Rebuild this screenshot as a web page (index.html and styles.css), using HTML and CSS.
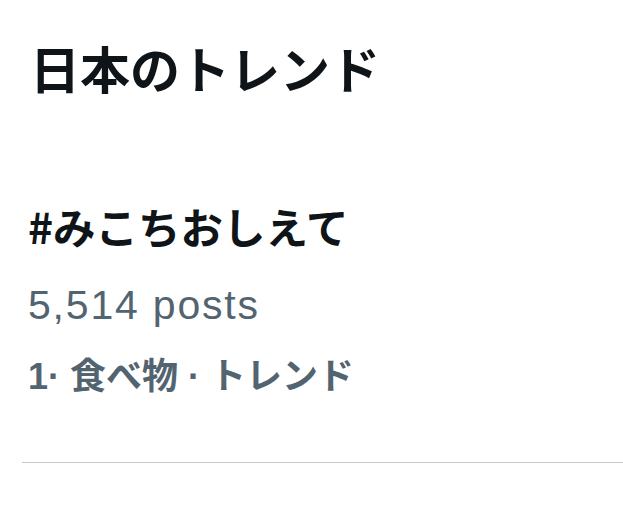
FILE: index.html
```html
<!DOCTYPE html>
<html lang="ja">
<head>
<meta charset="utf-8">
<link rel="stylesheet" href="styles.css">
</head>
<body>
<main class="panel">
  <h1 class="title">日本のトレンド</h1>
  <section class="trend">
    <div class="tag">#みこちおしえて</div>
    <div class="count">5,514 posts</div>
    <div class="meta">1<span class="dot1">·</span> 食べ物 · トレンド</div>
  </section>
  <hr class="divider">
</main>
</body>
</html>
```

FILE: styles.css
```css
html, body {
  margin: 0;
  padding: 0;
  background: #ffffff;
}
body {
  font-family: "Liberation Sans", "Noto Sans CJK JP", sans-serif;
  width: 623px;
  height: 509px;
  overflow: hidden;
}
.panel {
  display: flex;
  flex-direction: column;
  padding-top: 32px;
}
.title {
  margin: 0 0 0 30px;
  font-family: "Noto Sans CJK JP", sans-serif;
  font-weight: 700;
  font-size: 50px;
  line-height: 70px;
  color: #0f1419;
}
.trend {
  display: flex;
  flex-direction: column;
  padding-left: 28px;
  margin-top: 96px;
}
.tag {
  font-family: "Noto Sans CJK JP", sans-serif;
  font-weight: 700;
  font-size: 42.5px;
  line-height: 56px;
  color: #0f1419;
}
.count {
  font-family: "Liberation Sans", sans-serif;
  font-size: 41px;
  line-height: 50px;
  color: #536471;
  margin-top: 26px;
  letter-spacing: 1.8px;
}
.meta {
  font-family: "Liberation Sans", "Noto Sans CJK JP", sans-serif;
  font-weight: 700;
  font-size: 36px;
  line-height: 48px;
  color: #536471;
  margin-top: 23px;
}
.divider {
  margin: 61px 0 0 22px;
  border: 0;
  border-top: 1px solid #c9c9c9;
  height: 0;
}
```
